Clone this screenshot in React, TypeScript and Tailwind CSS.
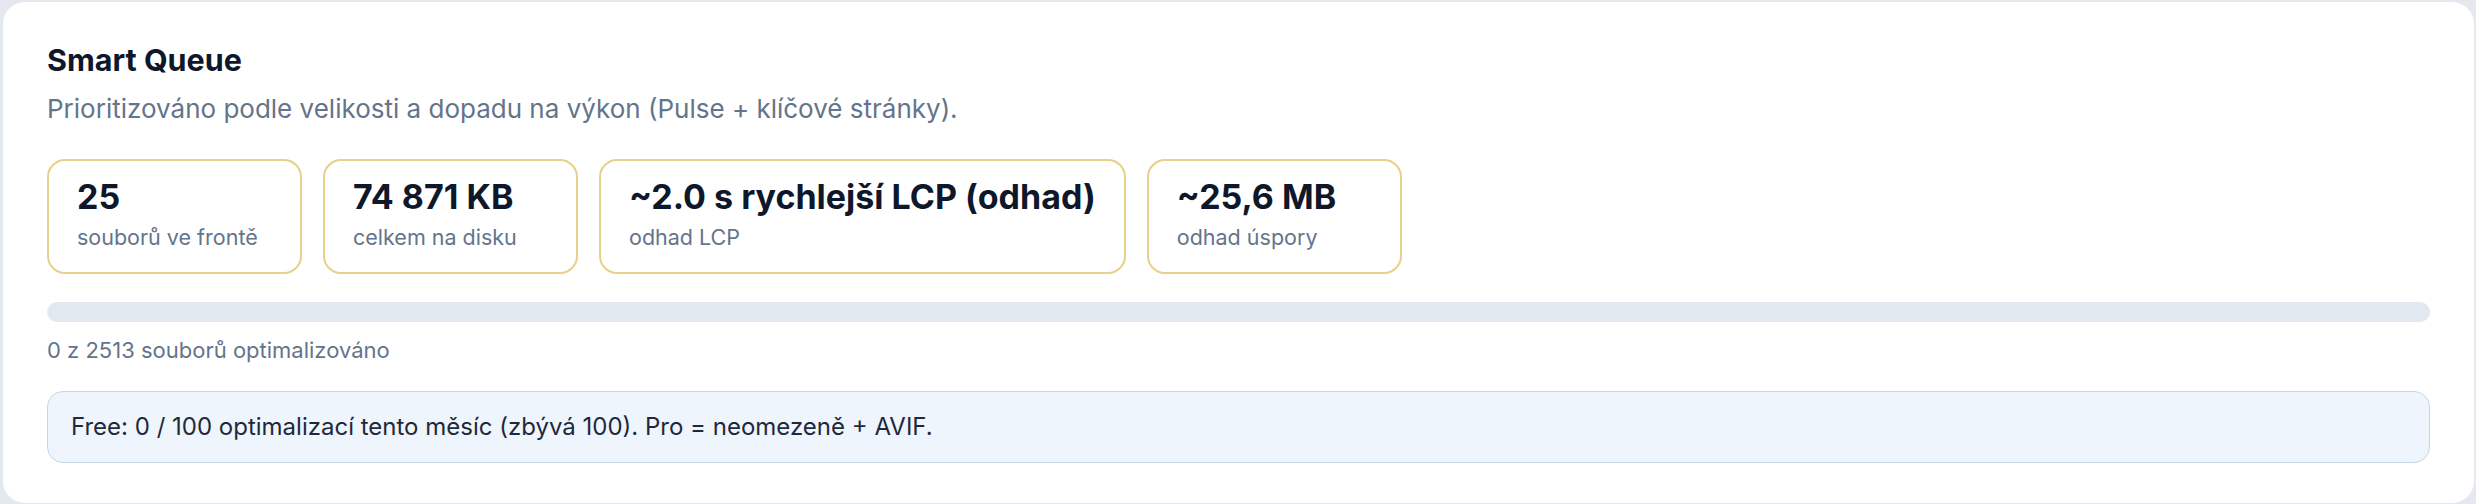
import React from 'react';

type Stat = { value: string; label: string };

const stats: Stat[] = [
  { value: '25', label: 'souborů ve frontě' },
  { value: '74 871 KB', label: 'celkem na disku' },
  { value: '~2.0 s rychlejší LCP (odhad)', label: 'odhad LCP' },
  { value: '~25,6 MB', label: 'odhad úspory' },
];

function StatCard({ value, label }: Stat) {
  return (
    <div className="min-w-[255px] rounded-[18px] border-2 border-[#e7d08b] bg-white px-[28px] pt-[16px] pb-[21px]">
      <div className="text-[34px] font-bold leading-[40px] text-[#0f172a]">{value}</div>
      <div className="mt-[6px] text-[21.5px] leading-[28px] text-[#64748b]">{label}</div>
    </div>
  );
}

export default function App() {
  const done = 0;
  const total = 2513;

  return (
    <div className="min-h-screen bg-[#e4e9f0] pt-[2px] pl-[3px] pr-[2px] font-[Inter,sans-serif]">
      <section className="rounded-[22px] bg-white px-[44px] pt-[40px] pb-[40px]">
        <h2 className="text-[30.5px] font-bold leading-[36px] text-[#0f172a]">Smart Queue</h2>
        <p className="mt-[15px] text-[26px] leading-[32px] text-[#64748b]">
          Prioritizováno podle velikosti a dopadu na výkon (Pulse + klíčové stránky).
        </p>

        <div className="mt-[34px] flex gap-[21px]">
          {stats.map((s) => (
            <StatCard key={s.label} {...s} />
          ))}
        </div>

        <div className="mt-[28px] h-[20px] w-full overflow-hidden rounded-full bg-[#e2e8f0]">
          <div className="h-full rounded-full bg-[#3b82f6]" style={{ width: `${(done / total) * 100}%` }} />
        </div>
        <div className="mt-[14px] text-[22px] leading-[28px] text-[#64748b]">
          {done} z {total} souborů optimalizováno
        </div>

        <div className="mt-[27px] flex h-[72px] items-center rounded-[16px] border-[1.5px] border-[#c6d6e6] bg-[#eff5fc] px-[23px] text-[24px] text-[#1e293b]">
          Free: 0 / 100 optimalizací tento měsíc (zbývá 100). Pro = neomezeně + AVIF.
        </div>
      </section>
    </div>
  );
}
